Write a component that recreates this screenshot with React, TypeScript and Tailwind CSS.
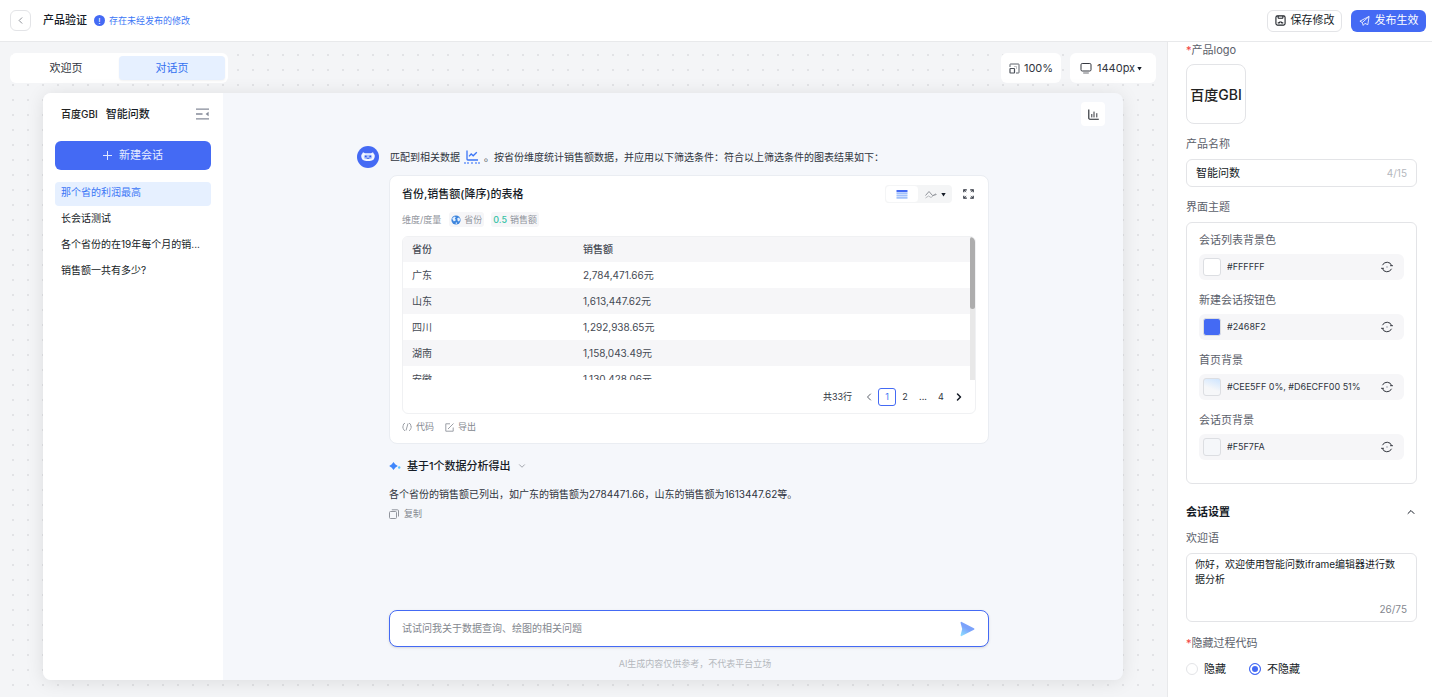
import { ChevronDown, ChevronLeft, ChevronRight, ChevronUp } from "lucide-react";

const sessions = [
  "那个省的利润最高",
  "长会话测试",
  "各个省份的在19年每个月的销...",
  "销售额一共有多少?",
];

const rows = [
  { province: "广东", sales: "2,784,471.66元" },
  { province: "山东", sales: "1,613,447.62元" },
  { province: "四川", sales: "1,292,938.65元" },
  { province: "湖南", sales: "1,158,043.49元" },
  { province: "安徽", sales: "1,130,428.06元" },
];

const themeColors = [
  { id: "list-bg", label: "会话列表背景色", value: "#FFFFFF", swatch: "bg-white" },
  { id: "new-btn", label: "新建会话按钮色", value: "#2468F2", swatch: "bg-[#446af4]" },
  {
    id: "home-bg",
    label: "首页背景",
    value: "#CEE5FF 0%, #D6ECFF00 51%",
    swatch: "bg-[linear-gradient(200deg,#cee5ff_0%,#f6f7f9_60%)]",
  },
  { id: "chat-bg", label: "会话页背景", value: "#F5F7FA", swatch: "bg-[#f5f7fa]" },
];

const SaveIcon = () => (
  <svg width="11" height="11" viewBox="0 0 12 12" fill="none" stroke="#1f2329" strokeWidth="1.2">
    <rect x="1" y="1" width="10" height="10" rx="1.6" />
    <path d="M3.4 1v1.8a.8.8 0 0 0 .8.8h3.6a.8.8 0 0 0 .8-.8V1M3 8.6h1.6l.6-.9h1.6l.6.9H9" />
  </svg>
);

const PlaneIcon = () => (
  <svg width="11" height="12" viewBox="0 0 12 12" fill="none" stroke="currentColor" strokeWidth=".9" strokeLinejoin="round">
    <path d="M11 1 1 6.200l2.600 1.500L11 1 9.600 10 6.400 8.600 4.600 10.800 3.600 7.700" />
  </svg>
);

const ScaleIcon = () => (
  <svg width="11" height="11" viewBox="0 0 11 11" fill="none" stroke="#4b5059">
    <path d="M1 4V1.5a.5.5 0 0 1 .5-.5h8a.5.5 0 0 1 .5.5v8a.5.5 0 0 1-.5.5H7" strokeWidth=".9" />
    <rect x="1" y="5.5" width="4.5" height="4.5" rx=".5" strokeWidth="1.2" />
    <path d="M5 3.500h2.500v2.500" strokeWidth=".7" opacity=".5" />
  </svg>
);

const ScreenIcon = () => (
  <svg width="12" height="12" viewBox="0 0 12 12" fill="none" stroke="#33373f">
    <rect x="1" y="1.500" width="10" height="7.500" rx="1.200" />
    <path d="M3.200 11h5.600" strokeWidth="1.200" opacity=".6" />
  </svg>
);

const CaretIcon = () => (
  <svg width="5" height="5" viewBox="0 0 5 5">
    <path d="M.3 1h4.400L2.500 4.500z" fill="#151b26" />
  </svg>
);

const CollapseIcon = () => (
  <svg width="13" height="12" viewBox="0 0 13 12" fill="none" stroke="#858b99" strokeWidth="1.3">
    <path d="M0 1.2h13M0 6h6.5M0 10.8h13" />
    <path d="M12.6 3.8v4.4L9.6 6z" fill="#858b99" stroke="none" />
  </svg>
);

const PlusIcon = () => (
  <svg width="9" height="9" viewBox="0 0 9 9" fill="none" stroke="#dfe7ff">
    <path d="M4.500 0v9M0 4.500h9" />
  </svg>
);

const BarsIcon = () => (
  <svg width="11" height="11" viewBox="0 0 11 11" fill="none" stroke="#1f2329">
    <path d="M.8.5v8.7a1 1 0 0 0 1 1h9" strokeWidth="1.1" />
    <path d="M3.8 5v3.4M6 2.6v5.8M8.8 4.2v4.2" strokeWidth=".9" />
  </svg>
);

const BotAvatar = () => (
  <svg className="shrink-0" width="22" height="22" viewBox="0 0 22 22">
    <circle cx="11" cy="11" r="11" fill="#446af4" />
    <path d="M6 6.200 8 7.200h6l2-1 .8 1.600q1 .8 1 2.200-.2 4.800-5 5H9.200q-4.800-.2-5-5 0-1.400 1-2.200z" fill="#f2f7ff" />
    <rect x="6.800" y="8.800" width="8.400" height="4.200" rx="2" fill="#a9c0fb" />
    <circle cx="8.800" cy="10.400" r=".9" fill="#2f57e8" />
    <circle cx="13.200" cy="10.400" r=".9" fill="#2f57e8" />
    <path d="M9.600 12q1.400 1.200 2.800 0" stroke="#2f57e8" fill="none" strokeWidth=".8" />
  </svg>
);

const LineChartIcon = () => (
  <svg width="12" height="11" viewBox="0 0 12 11" fill="none" stroke="#3b76f6" strokeWidth="1.300">
    <path d="M1 .5v8.700a.8.8 0 0 0 .8.8H12" />
    <path d="m3 6.400 2.200-2.400 2 1.800 3.600-3.600" />
  </svg>
);

const GlobeIcon = () => (
  <svg width="10" height="10" viewBox="0 0 10 10">
    <circle cx="5" cy="5" r="4.600" fill="#3d85dd" />
    <path d="M1.200 3.200 3.600 1.500l1.200.8-1 1.500 1 .9-.6 1.300-1.500.2-1-1.400zM6.200 3.300l2-.8 1 2.300-1.200 1.800-1.300-.6zM5 7.200l1.300.5-.6 1.300-1.200-.4z" fill="#e3f0ff" />
  </svg>
);

const TableIcon = () => (
  <svg width="12" height="9" viewBox="0 0 12 9">
    <path d="M.5 0h11v2.200H.5z" fill="#446af4" />
    <path d="M.5 2.600h11v1.700H.5zM.5 4.800h11v1.700H.5zM.5 7h11v1.800H.5z" fill="#a3c2fb" />
  </svg>
);

const TrendIcon = () => (
  <svg width="12" height="9" viewBox="0 0 12 9" fill="none" stroke="#84888f" strokeWidth=".9">
    <path d="m.5 5.500 3.500-4 3.500 4 4-1" />
    <path d="m.5 8 3-2 2.500 1.500 5-4" opacity=".6" />
  </svg>
);

const FullscreenIcon = () => (
  <svg width="11" height="10" viewBox="0 0 11 10" fill="none" stroke="#303540" strokeWidth="1.200">
    <path d="M.8 3.300V.8h3M7.200.8h3v2.500M10.200 6.700v2.500h-3M3.800 9.200h-3V6.700" />
    <path d="m1 1 2.200 2M10 1 7.800 3M10 9 7.800 7M1 9l2.200-2" strokeWidth=".8" />
  </svg>
);

const CodeIcon = () => (
  <svg width="10" height="10" viewBox="0 0 10 10" fill="none" stroke="#91959d">
    <path d="M3 1.200Q1.200 1.600 1.200 3.500T.5 5q.7.300.7 1.500T3 8.800M7 1.200q1.800.400 1.800 2.300T9.500 5q-.700.300-.700 1.500T7 8.800M6 1.500 4 8.500" strokeWidth=".9" />
  </svg>
);

const ExportIcon = () => (
  <svg width="9" height="9" viewBox="0 0 9 9" fill="none" stroke="#91959d">
    <path d="M5 .8H.8v7.400h7.400V4.500M3 6l5.500-5.500" strokeWidth=".9" />
  </svg>
);

const CopyIcon = () => (
  <svg width="10" height="10" viewBox="0 0 10 10" fill="none" stroke="#91959d">
    <rect x=".5" y="2.500" width="7" height="7" rx="1" />
    <path d="M2.800.8h5.700a1 1 0 0 1 1 1v5.700" />
  </svg>
);

const SparkIcon = () => (
  <svg width="12" height="10" viewBox="0 0 12 10">
    <path d="M4.500 1 6.200 3.300 8.800 5 6.200 6.700 4.500 9 2.800 6.700.2 5l2.600-1.700z" fill="#3f86fb" />
    <circle cx="10.200" cy="6.500" r="1.200" fill="#5cc4ff" />
  </svg>
);

const SendIcon = () => (
  <svg width="15" height="16" viewBox="0 0 15 16">
    <defs>
      <linearGradient id="send" x1="0.6" y1="0" x2="0" y2="1">
        <stop offset="0.4" stopColor="#7ba2fb" />
        <stop offset="1" stopColor="#8ee4ff" />
      </linearGradient>
    </defs>
    <path d="M1.700.9 13.900 7.200a.9.9 0 0 1 0 1.600L1.700 15.100A.8.8 0 0 1 .6 14.100L2.200 8 .6 1.900A.8.8 0 0 1 1.700.9z" fill="url(#send)" />
  </svg>
);

const ResetIcon = () => (
  <svg width="12" height="12" viewBox="0 0 12 12" fill="none" stroke="#33373f">
    <path d="M1.500 4.200a4.900 4.900 0 0 1 9.200.5M10.500 7.800a4.900 4.900 0 0 1-9.200-.5" />
    <path d="M9 4.700h3M3 7.300H0" strokeWidth=".9" />
    <circle cx="6" cy="6" r=".7" fill="#858b99" stroke="none" />
  </svg>
);

const Header = () => (
  <header className="flex h-[42px] shrink-0 items-center border-b border-[#e8e9eb] bg-white pl-[10px] pr-[6px]">
    <button aria-label="返回" className="flex h-[21px] w-[21px] items-center justify-center rounded-md border border-[#e3e4e7] text-[#84888f]">
      <ChevronLeft size={11} />
    </button>
    <h1 className="ml-3 text-[11px] font-medium text-[#151b26]">产品验证</h1>
    <span className="ml-[7px] flex items-center gap-1 text-[9px] text-[#3b76f6]">
      <span className="flex h-[11px] w-[11px] items-center justify-center rounded-full bg-[#446af4] text-[8px] leading-none text-white">
        !
      </span>
      存在未经发布的修改
    </span>
    <button className="ml-auto flex h-[22px] w-[75px] items-center justify-center gap-[5px] rounded-md border border-[#e3e4e7] text-[11px] text-[#151b26]">
      <SaveIcon />
      保存修改
    </button>
    <button className="ml-[9px] flex h-[22px] w-[75px] items-center justify-center gap-[5px] rounded-md bg-[#446af4] text-[11px] text-white">
      <PlaneIcon />
      发布生效
    </button>
  </header>
);

const Toolbar = () => (
  <div className="flex h-[30px] shrink-0 items-center pl-[10px] pr-[11px]">
    <div className="flex h-[30px] w-[218px] rounded-md bg-white p-[3px] text-[11px]">
      <button className="flex-1 text-[#303540]">欢迎页</button>
      <button className="flex-1 rounded bg-[#e6f0ff] text-[#3370f0] shadow-xs">对话页</button>
    </div>
    <button className="ml-auto flex h-[30px] w-[60px] items-center justify-center gap-1 rounded-md bg-white text-[11px] text-[#303540]">
      <ScaleIcon />
      100%
    </button>
    <label className="ml-[9px] flex h-[30px] w-[86px] items-center rounded-md bg-white pl-[10px] text-[11px] text-[#303540]">
      <ScreenIcon />
      <select aria-label="预览宽度" className="ml-[5px] mr-[2px] w-[38px] appearance-none bg-transparent">
        <option>1440px</option>
      </select>
      <CaretIcon />
    </label>
  </div>
);

const SessionList = () => (
  <aside className="w-[180px] shrink-0 rounded-l-lg bg-white px-3 pt-[13px]">
    <div className="flex h-4 items-center pl-[6px] pr-[2px]">
      <span className="text-[10px] font-medium text-[#222]">百度GBI</span>
      <span className="ml-2 text-[11px] font-medium text-[#151b26]">智能问数</span>
      <button aria-label="收起" className="ml-auto">
        <CollapseIcon />
      </button>
    </div>
    <button className="mt-[19px] flex h-[29px] w-full items-center justify-center gap-[7px] rounded-md bg-[#446af4] text-[11px] text-[#e8eeff]">
      <PlusIcon />
      新建会话
    </button>
    <nav className="mt-3 flex flex-col gap-[2px]">
      {sessions.map((session, index) => (
        <a
          key={session}
          href="#"
          className={
            index === 0
              ? "h-6 whitespace-nowrap rounded bg-[#e6f0ff] pl-[6px] text-[10px] leading-[20px] text-[#3b76f6]"
              : "h-6 whitespace-nowrap rounded pl-[6px] text-[10px] leading-[20px] text-[#151b26]"
          }
        >
          {session}
        </a>
      ))}
    </nav>
  </aside>
);

const ResultTable = () => (
  <div className="mt-[9px] overflow-hidden rounded-md border border-[#f0f1f3]">
    <div className="flex h-[143px] overflow-hidden">
      <table className="w-full table-fixed self-start text-left text-[10px] text-[#454a54]">
        <thead>
          <tr className="h-[25px] bg-[#f6f6f8]">
            <th className="w-[170px] pl-[9px] font-medium">省份</th>
            <th className="pl-[10px] font-medium">销售额</th>
          </tr>
        </thead>
        <tbody>
          {rows.map((row) => (
            <tr key={row.province} className="h-[26px] even:bg-[#f6f6f8]">
              <td className="pl-[9px]">{row.province}</td>
              <td className="pl-[10px]">{row.sales}</td>
            </tr>
          ))}
        </tbody>
      </table>
      {/* scrollbar */}
      <div className="w-[5px] shrink-0 bg-[#e8e8e8]">
        <div className="h-[72px] rounded-full bg-[#adadad]" />
      </div>
    </div>
    <div className="flex h-[33px] items-center justify-end pr-[7px] text-[9px] text-[#303540]">
      <span>共33行</span>
      <button aria-label="上一页" className="ml-[10px] flex w-[14px] justify-center text-[#5c616b]">
        <ChevronLeft size={12} />
      </button>
      <button className="ml-[2px] h-[18px] w-[18px] rounded-[3px] border border-[#446af4] text-[#3b76f6]">1</button>
      <button className="h-[18px] w-[18px]">2</button>
      <span className="w-[18px] text-center">...</span>
      <button className="h-[18px] w-[18px]">4</button>
      <button aria-label="下一页" className="flex w-[18px] justify-center text-[#151b26]">
        <ChevronRight size={12} strokeWidth={3} />
      </button>
    </div>
  </div>
);

const ResultCard = () => (
  <section className="mt-[7px] rounded-lg border border-[#eaedf2] bg-white px-3 pb-2 pt-[9px]">
    <div className="flex h-[18px] items-center">
      <h2 className="text-[11px] font-medium text-[#151b26]">省份,销售额(降序)的表格</h2>
      <div className="ml-auto flex h-[18px] rounded bg-[#f4f5f6]">
        <button aria-label="表格" className="flex w-[34px] items-center justify-center rounded border border-[#f4f5f6] bg-white">
          <TableIcon />
        </button>
        <button aria-label="图表" className="flex w-[33px] items-center justify-center gap-1">
          <TrendIcon />
          <CaretIcon />
        </button>
      </div>
      <button aria-label="全屏" className="ml-[11px] mr-[2px]">
        <FullscreenIcon />
      </button>
    </div>
    <div className="mt-[9px] flex h-[15px] items-center text-[9px] text-[#91959d]">
      <span>维度/度量</span>
      <span className="ml-2 flex h-[15px] items-center gap-[3px] rounded-[3px] bg-[#f6f6f8] px-[2px]">
        <GlobeIcon />
        省份
      </span>
      <span className="ml-[7px] flex h-[15px] items-center gap-[3px] rounded-[3px] bg-[#f6f6f8] px-[2px]">
        <b className="font-medium text-[#35c2a5]">0.5</b>
        销售额
      </span>
    </div>
    <ResultTable />
    <div className="mt-[5px] flex h-4 items-center gap-[11px] text-[9px] text-[#84888f]">
      <button className="flex items-center gap-1">
        <CodeIcon />
        代码
      </button>
      <button className="flex items-center gap-1">
        <ExportIcon />
        导出
      </button>
    </div>
  </section>
);

const Chat = () => (
  <main className="flex min-w-0 flex-1 flex-col px-[18px]">
    <button aria-label="图表" className="mt-[9px] flex h-6 w-6 shrink-0 items-center justify-center self-end rounded bg-white">
      <BarsIcon />
    </button>
    <div className="mx-auto mt-5 flex min-h-0 w-full max-w-[632px] flex-1 flex-col">
      <div className="flex h-[22px] items-center text-[10px] text-[#303540]">
        <BotAvatar />
        <p className="ml-[11px] flex items-center whitespace-nowrap">
          匹配到相关数据
          <a href="#" aria-label="数据详情" className="mx-1 border-b-2 border-dotted border-[#8fb0fa] px-[2px] pb-px">
            <LineChartIcon />
          </a>
          。按省份维度统计销售额数据，并应用以下筛选条件：符合以上筛选条件的图表结果如下：
        </p>
      </div>
      <div className="flex flex-1 flex-col pl-8">
        <ResultCard />
        <button className="mt-[14px] flex h-4 items-center gap-[6px] text-[11px] font-medium text-[#151b26]">
          <SparkIcon />
          基于1个数据分析得出
          <ChevronDown size={10} className="text-[#91959d]" />
        </button>
        <p className="mt-3 h-4 text-[10px] leading-4 text-[#303540]">
          各个省份的销售额已列出，如广东的销售额为2784471.66，山东的销售额为1613447.62等。
        </p>
        <button className="mt-1 flex h-4 items-center gap-[5px] text-[9px] text-[#84888f]">
          <CopyIcon />
          复制
        </button>
        <form className="mt-auto flex h-[37px] items-center rounded-lg border border-[#446af4] bg-white pl-3 pr-[13px] shadow-sm">
          <input
            aria-label="提问"
            placeholder="试试问我关于数据查询、绘图的相关问题"
            className="min-w-0 flex-1 text-[10px] outline-none placeholder:text-[#84888f]"
          />
          <button type="button" aria-label="发送">
            <SendIcon />
          </button>
        </form>
      </div>
      <p className="mb-[10px] mt-[10px] h-[13px] pl-11 text-center text-[9px] leading-[13px] text-[#b4b7bd]">
        AI生成内容仅供参考，不代表平台立场
      </p>
    </div>
  </main>
);

const Settings = () => (
  <aside className="w-[265px] shrink-0 overflow-hidden border-l border-[#e8e9eb] bg-white pl-[18px] pr-[15px] text-[11px] text-[#5c616b]">
    <div className="h-4 leading-4">
      <span className="text-[#f33e3e]">*</span>产品logo
    </div>
    <button className="mt-[6px] flex h-[60px] w-[60px] items-center justify-center rounded-lg border border-[#e3e4e7] text-[14px] font-medium text-[#222]">
      百度GBI
    </button>
    <label htmlFor="name" className="mt-3 block h-4 leading-4">
      产品名称
    </label>
    <div className="mt-[7px] flex h-7 items-center rounded-md border border-[#e3e4e7] px-[9px]">
      <input id="name" defaultValue="智能问数" className="min-w-0 flex-1 text-[#151b26] outline-none" />
      <span className="text-[10px] text-[#b4b7bd]">4/15</span>
    </div>
    <div className="mt-3 h-4 leading-4">界面主题</div>
    <div className="mt-[7px] flex flex-col gap-3 rounded-md border border-[#e3e4e7] px-3 pb-[23px] pt-[9px]">
      {themeColors.map((color) => (
        <div key={color.id}>
          <label htmlFor={color.id} className="block h-4 leading-4">
            {color.label}
          </label>
          <div className="mt-[6px] flex h-[26px] items-center rounded-md bg-[#f6f6f8] pl-1 pr-[11px]">
            <span className={`h-[18px] w-[18px] rounded-[3px] border border-[#dcdee2] ${color.swatch}`} />
            <input
              id={color.id}
              defaultValue={color.value}
              className="ml-[6px] min-w-0 flex-1 bg-transparent text-[9px] text-[#303540] outline-none"
            />
            <button aria-label="重置">
              <ResetIcon />
            </button>
          </div>
        </div>
      ))}
    </div>
    <button className="mt-5 flex h-4 w-full items-center justify-between font-bold text-[#151b26]">
      会话设置
      <ChevronUp size={12} />
    </button>
    <label htmlFor="welcome" className="mt-[10px] block h-4 leading-4">
      欢迎语
    </label>
    <div className="mt-[7px] flex h-[69px] flex-col rounded-md border border-[#e3e4e7] pl-2 pr-[9px] pt-[3px]">
      <textarea
        id="welcome"
        defaultValue="你好，欢迎使用智能问数iframe编辑器进行数据分析"
        className="w-[208px] flex-1 resize-none text-[10px] leading-[15px] text-[#151b26] outline-none"
      />
      <span className="h-[18px] self-end text-[10px] leading-[12px] text-[#84888f]">26/75</span>
    </div>
    <fieldset className="mt-[13px]">
      <legend className="h-4 leading-4">
        <span className="text-[#f33e3e]">*</span>隐藏过程代码
      </legend>
      <div className="mt-[10px] flex h-4 items-center gap-[23px] text-[#151b26]">
        <label className="flex items-center gap-[6px]">
          <input
            type="radio"
            name="hide"
            className="h-3 w-3 appearance-none rounded-full border border-[#e3e4e7] checked:border-[#446af4] checked:bg-[#446af4] checked:shadow-[inset_0_0_0_2px_white]"
          />
          隐藏
        </label>
        <label className="flex items-center gap-[6px]">
          <input
            type="radio"
            name="hide"
            defaultChecked
            className="h-3 w-3 appearance-none rounded-full border border-[#e3e4e7] checked:border-[#446af4] checked:bg-[#446af4] checked:shadow-[inset_0_0_0_2px_white]"
          />
          不隐藏
        </label>
      </div>
    </fieldset>
  </aside>
);

const App = () => {
  return (
    <div className="flex h-screen flex-col bg-white font-[Inter,'Noto_Sans_CJK_SC',sans-serif]">
      <Header />
      <div className="flex min-h-0 flex-1">
        <div className="flex min-w-0 flex-1 flex-col bg-[#f4f5f7] bg-[radial-gradient(circle_at_13px_13px,#e2e3e6_1px,transparent_1px)] bg-[size:15px_15px] pt-[11px]">
          <Toolbar />
          <div className="mb-[17px] ml-[43px] mr-[44px] mt-[10px] flex min-h-0 flex-1 rounded-lg bg-[#f5f7fb] shadow-[0_2px_18px_rgba(0,0,0,0.1)]">
            <SessionList />
            <Chat />
          </div>
        </div>
        <Settings />
      </div>
    </div>
  );
};

export default App;
